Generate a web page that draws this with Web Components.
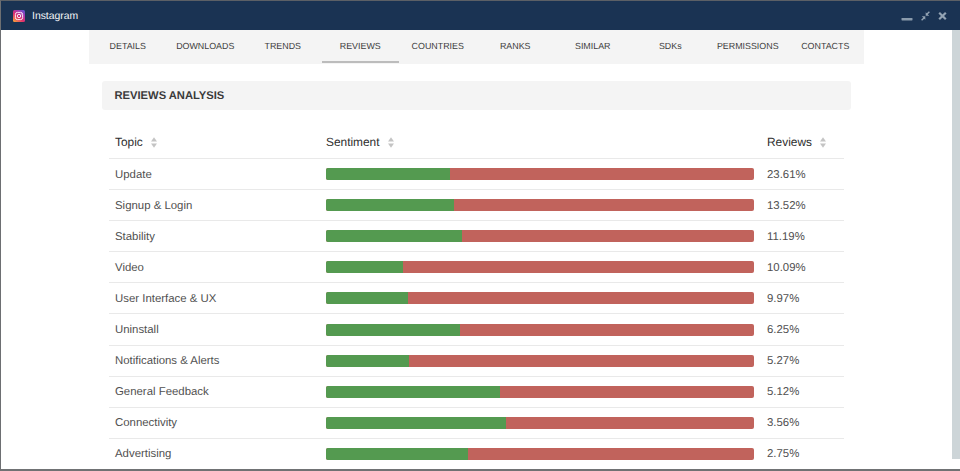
<!DOCTYPE html>
<html>
<head>
<meta charset="utf-8">
<title>Instagram</title>
<style>
  html, body { margin: 0; height: 100%; background: #fff; overflow: hidden; }
  body { font-family: "Liberation Sans", Arial, sans-serif; text-rendering: geometricPrecision; }
</style>
</head>
<body>
<app-window>
  <title-bar slot="bar">Instagram</title-bar>
  <tab-nav active="REVIEWS"></tab-nav>
  <section-heading>REVIEWS ANALYSIS</section-heading>
  <reviews-table></reviews-table>
</app-window>
<script>
(function () {
  const SORT_ICON = `
    <svg width="6" height="11" viewBox="0 0 6 11" aria-hidden="true">
      <path d="M3 0.3L6 4.4H0Z" fill="#c4c4c4"/>
      <path d="M3 10.7L6 6.6H0Z" fill="#c4c4c4"/>
    </svg>`;

  class AppWindow extends HTMLElement {
    constructor() {
      super();
      this.attachShadow({ mode: 'open' });
      this.shadowRoot.innerHTML = `
        <style>
          :host {
            display: flex;
            flex-direction: column;
            box-sizing: border-box;
            width: 960px;
            height: 471px;
            border-top: 1px solid #5c6066;
            border-left: 1px solid #6d6f72;
            border-bottom: 2px solid #707274;
            overflow: hidden;
            background: #fff;
          }
          .body {
            flex: 1;
            min-height: 0;
            display: flex;
          }
          .content {
            flex: 1;
            min-width: 0;
            padding-left: 88px;
          }
          .scrollbar {
            width: 8px;
            margin-bottom: 10px;
            background: #cdd5d8;
          }
        </style>
        <slot name="bar"></slot>
        <div class="body">
          <div class="content"><slot></slot></div>
          <div class="scrollbar"></div>
        </div>
      `;
    }
  }

  class TitleBar extends HTMLElement {
    constructor() {
      super();
      this.attachShadow({ mode: 'open' });
      this.shadowRoot.innerHTML = `
        <style>
          :host {
            display: flex;
            align-items: center;
            flex: none;
            height: 29px;
            padding: 0 13px 0 12px;
            background: #1a3353;
            color: #f4f6f8;
            font-size: 10.4px;
          }
          .logo { flex: none; margin-right: 7px; }
          .name { flex: 1; padding-top: 2px; }
          .controls { display: flex; align-items: center; gap: 8px; }
          .controls svg { display: block; }
        </style>
        <svg class="logo" width="12" height="12" viewBox="0 0 12 12" aria-hidden="true">
          <defs>
            <linearGradient id="ig" x1="0.1" y1="1" x2="0.9" y2="0">
              <stop offset="0" stop-color="#f9a03a"/>
              <stop offset="0.4" stop-color="#e1306c"/>
              <stop offset="0.75" stop-color="#a03ab4"/>
              <stop offset="1" stop-color="#5a55d0"/>
            </linearGradient>
          </defs>
          <rect width="12" height="12" rx="1.5" fill="url(#ig)"/>
          <rect x="2.4" y="2.4" width="7.2" height="7.2" rx="2" fill="none" stroke="#fff" stroke-width="0.9"/>
          <circle cx="6" cy="6" r="1.7" fill="none" stroke="#fff" stroke-width="0.9"/>
          <circle cx="8.1" cy="3.9" r="0.5" fill="#fff"/>
        </svg>
        <span class="name"><slot></slot></span>
        <div class="controls">
          <svg width="12" height="10" viewBox="0 0 12 10" aria-hidden="true">
            <rect x="0.5" y="7" width="11" height="2.4" rx="0.6" fill="#8a9bac"/>
          </svg>
          <svg width="9" height="10" viewBox="0 0 9 10" aria-hidden="true">
            <path d="M0.6 9.3L3.2 6.7M8.4 0.7L5.8 3.3" stroke="#93a3b3" stroke-width="1.4" fill="none"/>
            <path d="M0.8 5.2H4.3V8.8ZM8.2 4.8H4.7V1.2Z" fill="#93a3b3"/>
          </svg>
          <svg width="9" height="10" viewBox="0 0 9 10" aria-hidden="true">
            <path d="M1.2 1.7L7.8 8.3M7.8 1.7L1.2 8.3" stroke="#93a3b3" stroke-width="2.2" fill="none"/>
          </svg>
        </div>
      `;
    }
  }

  const TABS = ['DETAILS', 'DOWNLOADS', 'TRENDS', 'REVIEWS', 'COUNTRIES', 'RANKS', 'SIMILAR', 'SDKs', 'PERMISSIONS', 'CONTACTS'];

  class TabNav extends HTMLElement {
    constructor() {
      super();
      this.attachShadow({ mode: 'open' });
      const active = this.getAttribute('active');
      this.shadowRoot.innerHTML = `
        <style>
          :host {
            display: grid;
            grid-template-columns: repeat(10, 1fr);
            width: 775px;
            height: 34px;
            background: #f4f4f4;
            font-size: 8.9px;
            color: #3c3c3c;
          }
          .tab {
            display: flex;
            align-items: center;
            justify-content: center;
            box-sizing: border-box;
            padding-top: 1px;
            border-bottom: 2px solid transparent;
            margin-bottom: 1px;
            white-space: nowrap;
          }
          .active { border-bottom-color: #bcbcbc; }
        </style>
        ${TABS.map((t) => `<div class="tab${t === active ? ' active' : ''}">${t}</div>`).join('')}
      `;
    }
  }

  class SectionHeading extends HTMLElement {
    constructor() {
      super();
      this.attachShadow({ mode: 'open' });
      this.shadowRoot.innerHTML = `
        <style>
          :host {
            display: flex;
            align-items: center;
            box-sizing: border-box;
            width: 749px;
            height: 29px;
            margin: 17px 0 0 13px;
            padding-left: 12.5px;
            border-radius: 3px;
            background: #f4f4f4;
            color: #3a3a3a;
            font-size: 11.2px;
            font-weight: 700;
          }
        </style>
        <slot></slot>
      `;
    }
  }

  const ROWS = [
    ['Update', 124, '23.61%'],
    ['Signup & Login', 128, '13.52%'],
    ['Stability', 136, '11.19%'],
    ['Video', 77, '10.09%'],
    ['User Interface & UX', 82, '9.97%'],
    ['Uninstall', 134, '6.25%'],
    ['Notifications & Alerts', 83, '5.27%'],
    ['General Feedback', 174, '5.12%'],
    ['Connectivity', 180, '3.56%'],
    ['Advertising', 142, '2.75%'],
  ];

  class SentimentBar extends HTMLElement {
    constructor() {
      super();
      this.attachShadow({ mode: 'open' });
      this.shadowRoot.innerHTML = `
        <style>
          :host {
            display: block;
            width: 428px;
            height: 12px;
            border-radius: 2px;
            overflow: hidden;
            background: #c1635c;
          }
          .good { height: 100%; background: #549a50; }
        </style>
        <div class="good" style="width:${this.getAttribute('good')}px"></div>
      `;
    }
  }

  class ReviewsTable extends HTMLElement {
    constructor() {
      super();
      this.attachShadow({ mode: 'open' });
      const head = (label) => `<div class="th">${label}${SORT_ICON}</div>`;
      this.shadowRoot.innerHTML = `
        <style>
          :host {
            display: block;
            width: 735px;
            margin: 17px 0 0 20px;
            font-size: 11.4px;
            color: #505050;
          }
          .row {
            display: grid;
            grid-template-columns: 217px 441px 1fr;
            align-items: center;
            height: 31.1px;
            box-sizing: border-box;
            border-top: 1px solid #e9e9e9;
          }
          .row > :first-child { padding-left: 6px; }
          .cell { padding-top: 1px; }
          .head {
            height: 31px;
            border-top: 0;
            color: #2e2e2e;
            font-size: 11.9px;
          }
          .th { display: flex; align-items: center; gap: 8.5px; padding-bottom: 1px; }
          .th svg { display: block; }
        </style>
        <div class="row head">${head('Topic')}${head('Sentiment')}${head('Reviews')}</div>
        ${ROWS.map(([topic, good, share]) => `
          <div class="row">
            <div class="cell">${topic.replace('&', '&amp;')}</div>
            <div><sentiment-bar good="${good}"></sentiment-bar></div>
            <div class="cell">${share}</div>
          </div>`).join('')}
      `;
    }
  }

  customElements.define('app-window', AppWindow);
  customElements.define('title-bar', TitleBar);
  customElements.define('tab-nav', TabNav);
  customElements.define('section-heading', SectionHeading);
  customElements.define('sentiment-bar', SentimentBar);
  customElements.define('reviews-table', ReviewsTable);
})();
</script>
</body>
</html>
